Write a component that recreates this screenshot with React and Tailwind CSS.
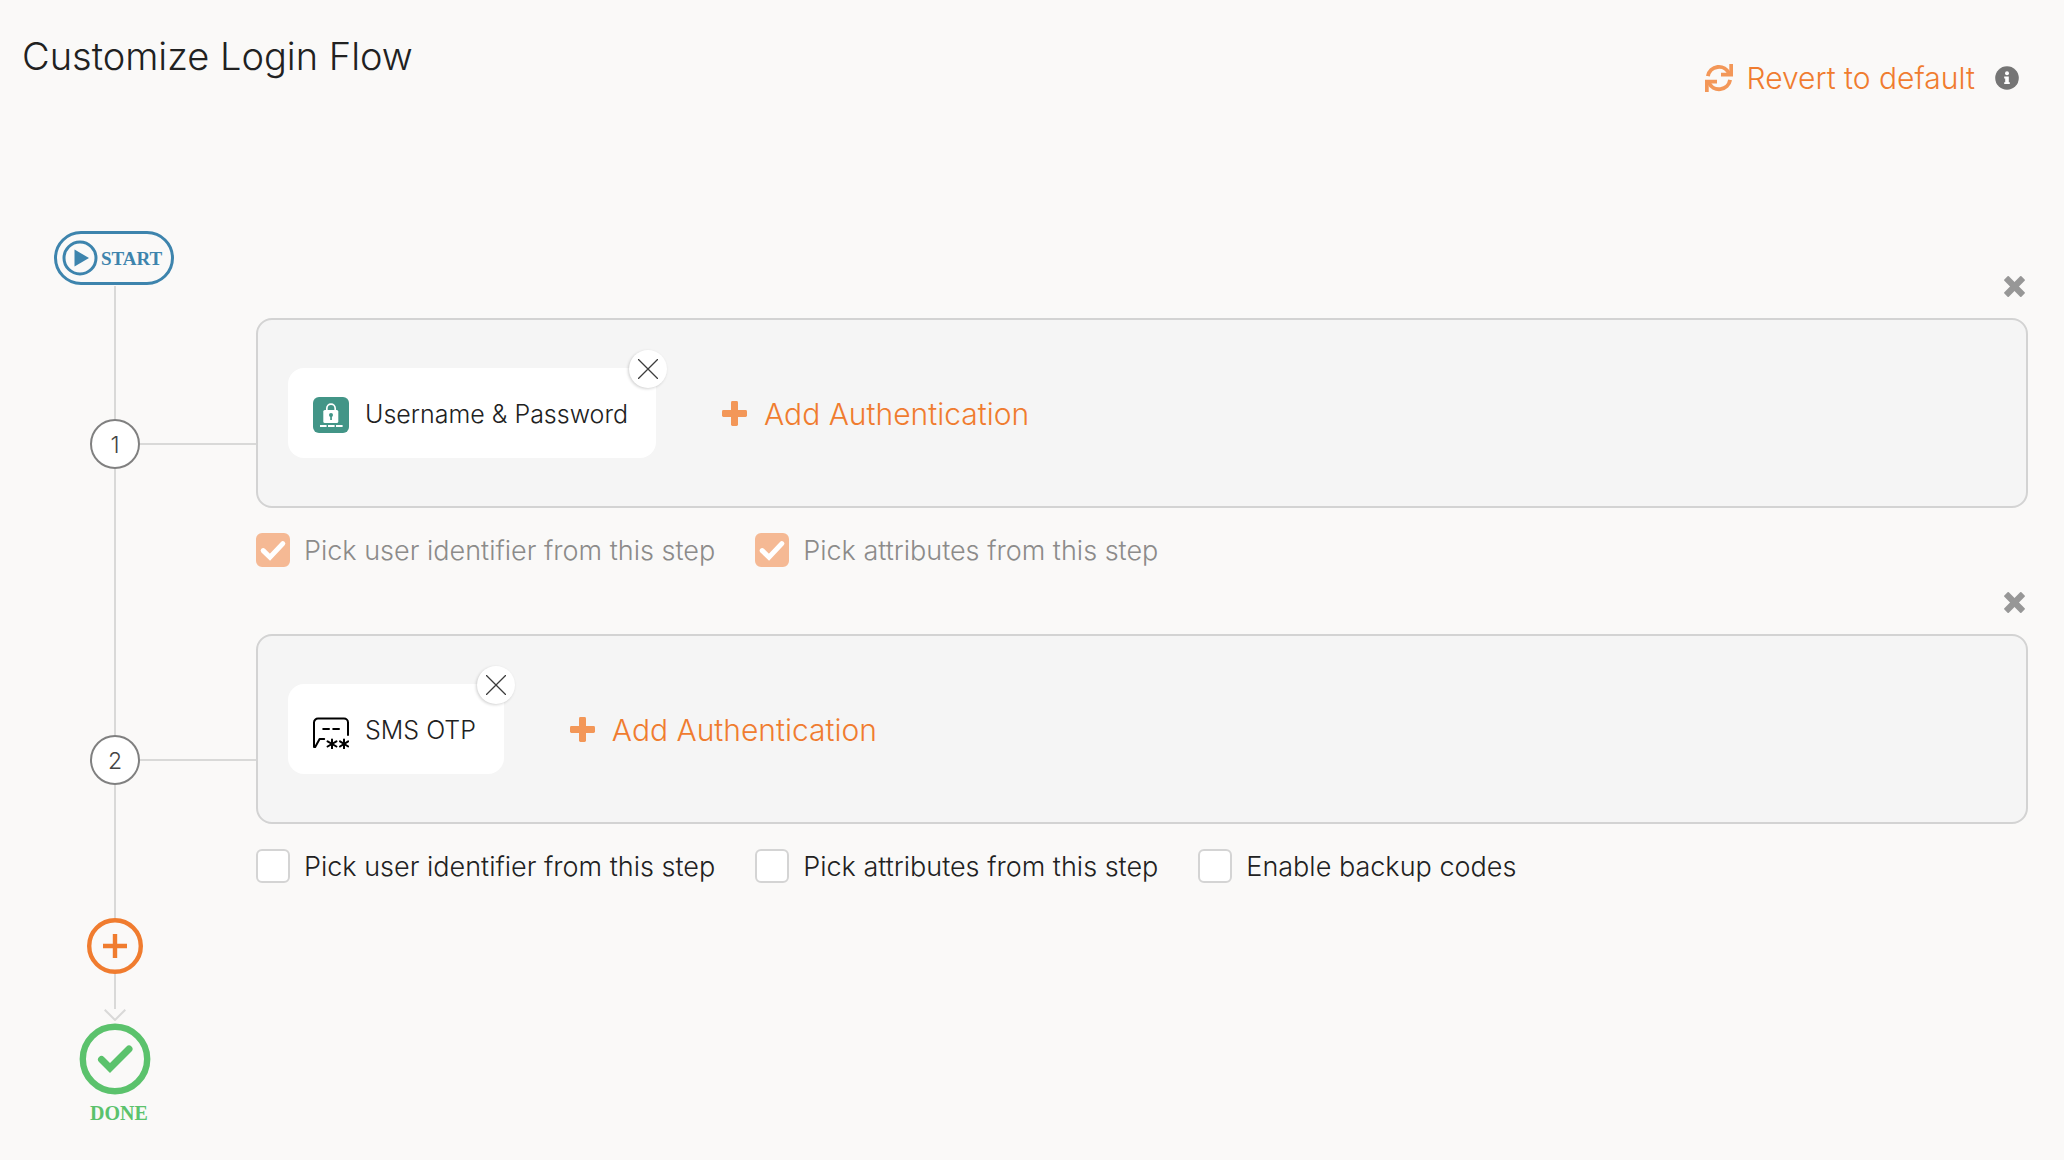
import React from "react";

const SyncIcon = () => (
  <svg viewBox="0 0 28 28" className="size-7 shrink-0" aria-hidden="true">
    <path d="M2.9 12.2A11.2 11.2 0 0 1 24.2 9.6" fill="none" stroke="currentColor" strokeWidth="3.9" />
    <path d="M25.1 15.9A11.2 11.2 0 0 1 3.8 18.5" fill="none" stroke="currentColor" strokeWidth="3.9" />
    <path d="M24.3 0H28V12.4H16V8.7H24.3Z" fill="currentColor" />
    <path d="M3.7 28H0V15.7H12V19.4H3.7Z" fill="currentColor" />
  </svg>
);

const InfoIcon = () => (
  <svg viewBox="0 0 24 24" className="size-6" aria-hidden="true">
    <circle cx="12" cy="12" r="11.8" fill="#757575" />
    <circle cx="12" cy="7.3" r="2" fill="#fff" />
    <path d="M9.2 10.6h4.6v5.6h1v1.9H9.2v-1.9h1v-3.7h-1z" fill="#fff" />
  </svg>
);

const CrossIcon = () => (
  <svg viewBox="0 0 21 21" className="size-[21px]" aria-hidden="true">
    <g fill="#979797" stroke="#979797" strokeWidth="1.8" strokeLinejoin="round">
      <path d="M4.2 1 1 4.2 16.8 20 20 16.8Z" />
      <path d="M16.8 1 20 4.2 4.2 20 1 16.8Z" />
    </g>
  </svg>
);

const PlusIcon = () => (
  <svg viewBox="0 0 25 25" className="size-[25px] shrink-0" aria-hidden="true">
    <rect x="9" y="0" width="7" height="25" rx="1.4" fill="#f39758" />
    <rect x="0" y="9" width="25" height="7" rx="1.4" fill="#f39758" />
  </svg>
);

const LockIcon = () => (
  <svg viewBox="0 0 36 36" className="size-9 shrink-0" aria-hidden="true">
    <rect width="36" height="36" rx="6" fill="#429587" />
    <path d="M13.8 14v-2.6a4.2 4.2 0 0 1 8.4 0V14" fill="none" stroke="#fff" strokeWidth="1.7" />
    <rect x="10.3" y="13" width="15" height="13" rx="1.6" fill="#fff" />
    <circle cx="18" cy="18" r="2" fill="#429587" />
    <rect x="17.2" y="18" width="1.7" height="5" fill="#429587" />
    <path d="M7 29h6.6M15 29h6.6M23 29h6.6" stroke="#fff" strokeWidth="2" />
  </svg>
);

const SmsIcon = () => (
  <svg viewBox="0 0 36 36" className="size-9 shrink-0" aria-hidden="true">
    <g fill="none" stroke="#000" strokeLinecap="round" strokeLinejoin="round">
      <path d="M35 22V9.5a4 4 0 0 0-4-4H5a4 4 0 0 0-4 4V34h1.2L6.6 26h4.6" strokeWidth="2" />
      <path d="M10.2 16h5.8M20.2 16H26" strokeWidth="2" />
      <path d="M19 26.4v9M14.6 28.3l8.8 5.2M23.4 28.3l-8.8 5.2" strokeWidth="2" />
      <path d="M31 26.4v9M27 28.3l8.2 5.2M35.2 28.3l-8.2 5.2" strokeWidth="2" />
    </g>
  </svg>
);

const steps = [
  {
    id: 1,
    name: "Username & Password",
    Icon: LockIcon,
    options: [
      { label: "Pick user identifier from this step", checked: true, disabled: true },
      { label: "Pick attributes from this step", checked: true, disabled: true },
    ],
  },
  {
    id: 2,
    name: "SMS OTP",
    Icon: SmsIcon,
    options: [
      { label: "Pick user identifier from this step" },
      { label: "Pick attributes from this step" },
      { label: "Enable backup codes" },
    ],
  },
];

function Option({ label, checked = false, disabled = false }) {
  return (
    <label className={disabled ? "flex items-center gap-3.5 text-[#8c8b8a]" : "flex items-center gap-3.5 text-[#212121]"}>
      <span className="grid size-[34px] shrink-0 place-items-center">
        <input
          type="checkbox"
          defaultChecked={checked}
          disabled={disabled}
          className="peer col-start-1 row-start-1 size-[34px] appearance-none rounded-md border-2 border-[#d4d4d4] bg-white checked:border-[#f5b994] checked:bg-[#f5b994]"
        />
        <svg
          viewBox="0 0 34 34"
          className="pointer-events-none invisible col-start-1 row-start-1 size-[34px] peer-checked:visible"
          aria-hidden="true"
        >
          <path d="M7.2 17.6 14 24.2 26.8 10.6" fill="none" stroke="#fff" strokeWidth="5" strokeLinecap="round" />
        </svg>
      </span>
      <span className="pt-0.5 text-[27px] leading-8">{label}</span>
    </label>
  );
}

function Step({ id, name, Icon, options }) {
  return (
    <li className="flex">
      <div className="flex w-[50px] shrink-0 flex-col items-center">
        <div className="h-[133px] w-0.5 bg-[#d9d9d8]" />
        <div className="flex size-[50px] items-center justify-center rounded-full border-2 border-[#808080] bg-white pt-0.5 text-[23px] text-[#444]">
          {id}
        </div>
        <div className="w-0.5 flex-1 bg-[#d9d9d8]" />
      </div>
      <div className="mt-[157px] h-0.5 w-[116px] shrink-0 bg-[#d9d9d8]" />
      <section className="-mt-2.5 min-w-0 flex-1 pb-[35px]" aria-label={`Step ${id}`}>
        <div className="flex justify-end pr-[3px]">
          <button type="button" aria-label={`Remove step ${id}`}>
            <CrossIcon />
          </button>
        </div>
        <div className="mt-[21px] flex items-center gap-[66px] rounded-2xl border-2 border-[#d3d3d3] bg-[#f5f5f5] px-[30px] py-12">
          <div className="relative flex h-[90px] items-center gap-4 rounded-2xl bg-white pt-1 pr-7 pl-[25px]">
            <Icon />
            <span className="text-[25px] text-[#212121]">{name}</span>
            <button
              type="button"
              aria-label={`Remove ${name}`}
              className="absolute -top-[18px] -right-[11px] flex size-[38px] items-center justify-center rounded-full bg-white shadow-[-1px_1px_3px_rgba(0,0,0,0.18)]"
            >
              <svg viewBox="0 0 20 20" className="size-5" aria-hidden="true">
                <path d="M0 0 20 20M20 0 0 20" stroke="#3c3c3c" strokeWidth="1.3" />
              </svg>
            </button>
          </div>
          <button type="button" className="flex items-center gap-[17px] text-[30px] leading-9 text-[#f07c2f]">
            <PlusIcon />
            <span className="pt-0.5">Add Authentication</span>
          </button>
        </div>
        <div className="mt-[25px] flex flex-wrap gap-10">
          {options.map((option) => (
            <Option key={option.label} {...option} />
          ))}
        </div>
      </section>
    </li>
  );
}

export default function App() {
  return (
    <main className="min-h-screen bg-[#faf9f8] pb-8 font-['Inter',sans-serif] font-light">
      <header className="flex items-start justify-between pt-8 pr-[45px] pl-[22px]">
        <h1 className="text-[38px] leading-12 text-[#212121]">Customize Login Flow</h1>
        <div className="mt-7 flex items-center gap-5">
          <button type="button" className="flex items-center gap-3.5 text-[30px] leading-9 text-[#f07c2f]">
            <span className="text-[#f39758]">
              <SyncIcon />
            </span>
            Revert to default
          </button>
          <button type="button" aria-label="About reverting">
            <InfoIcon />
          </button>
        </div>
      </header>

      <div className="mt-[135px] pr-9 pl-[90px]">
        <div className="-ml-9 flex h-[54px] w-[120px] items-center gap-[3px] rounded-full border-3 border-[#3d84ad] pl-[5px] text-[#3d84ad]">
          <svg viewBox="0 0 36 36" className="size-9 shrink-0" aria-hidden="true">
            <circle cx="18" cy="18" r="16" fill="none" stroke="currentColor" strokeWidth="3" />
            <path d="M12.5 9.5 27 18 12.5 26.5Z" fill="currentColor" />
          </svg>
          <span className="pt-0.5 font-['Liberation_Serif',serif] text-[19px] font-bold">START</span>
        </div>

        <ol className="mt-px">
          {steps.map((step) => (
            <Step key={step.id} {...step} />
          ))}
        </ol>

        <div className="-ml-5 flex w-[90px] flex-col items-center">
          <button type="button" aria-label="Add step" className="text-[#f07c2f]">
            <svg viewBox="0 0 56 56" className="size-14" aria-hidden="true">
              <circle cx="28" cy="28" r="25.8" fill="none" stroke="currentColor" strokeWidth="4.4" />
              <path d="M28 16v24M16 28h24" stroke="currentColor" strokeWidth="4.4" />
            </svg>
          </button>
          <div className="h-[35px] w-0.5 bg-[#d9d9d8]" />
          <svg viewBox="0 0 22 12" className="h-3 w-[22px]" aria-hidden="true">
            <path d="M.7.7 11 11 21.3.7" fill="none" stroke="#d9d9d8" strokeWidth="2" />
          </svg>
          <svg viewBox="0 0 72 72" className="mt-0.5 size-[72px] text-[#5bc26c]" aria-hidden="true">
            <circle cx="36" cy="36" r="32.2" fill="none" stroke="currentColor" strokeWidth="6.4" />
            <path d="M22.5 36.5 31 45 50 26" fill="none" stroke="currentColor" strokeWidth="7" strokeLinecap="round" />
          </svg>
          <span className="mt-1.5 pl-2 font-['Liberation_Serif',serif] text-[20px] leading-6 font-bold text-[#5bc26c]">
            DONE
          </span>
        </div>
      </div>
    </main>
  );
}
